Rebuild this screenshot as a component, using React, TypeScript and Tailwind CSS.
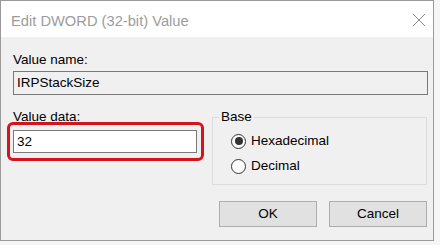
import React from "react";

const font = { fontFamily: '"Liberation Sans", Arial, sans-serif' };

const Radio: React.FC<{ label: string; checked?: boolean }> = ({ label, checked }) => (
  <label className="flex items-center h-[20px] gap-[5px] text-[13.5px] leading-[16px] text-black">
    <span className="w-[15px] h-[15px] rounded-full border-[1.5px] border-[#333333] bg-white flex items-center justify-center">
      {checked && <span className="w-[8px] h-[8px] rounded-full bg-[#333333]" />}
    </span>
    <span>{label}</span>
  </label>
);

export default function App() {
  return (
    <div className="w-[440px] h-[245px] bg-[#f6f6f6] overflow-hidden" style={font}>
      <div className="w-[434px] h-[241px] border border-[#9a9a9a] flex flex-col">
        {/* title bar */}
        <div className="h-[36px] bg-white flex items-start justify-between pl-[10px] pr-[7px]">
          <span className="pt-[11px] text-[14.7px] leading-[18px] text-[#9c9c9c]">
            Edit DWORD (32-bit) Value
          </span>
          <svg width="14" height="14" viewBox="0 0 14 14" className="mt-[12px]">
            <path d="M1 1 L13 13 M13 1 L1 13" stroke="#8a8a8a" strokeWidth="1" fill="none" />
          </svg>
        </div>

        {/* body */}
        <div className="flex-1 bg-[#f0f0f0] pl-[12px] pr-[5px] pt-[15px] text-[13.5px] leading-[16px] text-black">
          <div>Value name:</div>
          <div className="mt-[3px] h-[24px] border border-[#7a7a7a] bg-[#f0f0f0] flex items-center pl-[3px]">
            IRPStackSize
          </div>

          <div className="mt-[14px] flex">
            <div className="w-[199px] flex flex-col">
              <div>Value data:</div>
              <div className="-mt-[3px] -ml-[6px] w-[197px] border-[3px] border-[#d3141c] rounded-[6px] pl-[3px] pr-[4px] py-[5px]">
                <div className="h-[23px] border border-[#7a7a7a] bg-white flex items-center pl-[3px]">32</div>
              </div>
            </div>

            <fieldset className="w-[215px] border border-[#dcdcdc] pb-[8px]">
              <legend className="ml-[6px] px-[2px] leading-[16px]">Base</legend>
              <div className="pl-[18px] pt-[6px] flex flex-col gap-[5px]">
                <Radio label="Hexadecimal" checked />
                <Radio label="Decimal" />
              </div>
            </fieldset>
          </div>

          <div className="mt-[16px] flex justify-end gap-[12px] pr-[1px]">
            <button className="w-[98px] h-[26px] bg-[#e1e1e1] border border-[#adadad] text-[13.5px]">OK</button>
            <button className="w-[98px] h-[26px] bg-[#e1e1e1] border border-[#adadad] text-[13.5px]">Cancel</button>
          </div>
        </div>
      </div>
    </div>
  );
}
